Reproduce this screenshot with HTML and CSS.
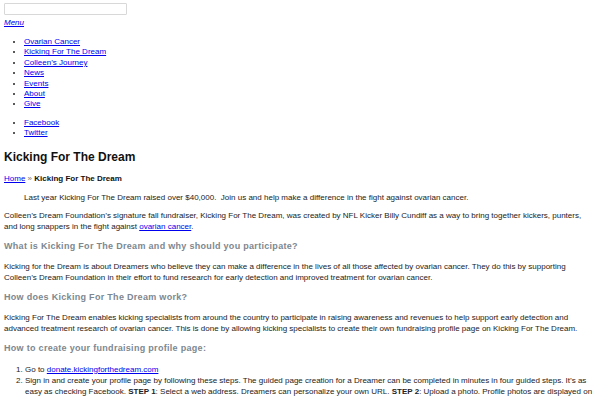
FILE: index.html
```html
<!DOCTYPE html>
<html>
<head>
<meta charset="utf-8">
<link rel="stylesheet" href="styles.css">
</head>
<body>
<div class="page">
  <form class="search"><input class="search-input" type="text"></form>
  <a class="menu-toggle" href="#">Menu</a>
  <ul class="nav">
    <li><a href="#">Ovarian Cancer</a></li>
    <li><a href="#">Kicking For The Dream</a></li>
    <li><a href="#">Colleen’s Journey</a></li>
    <li><a href="#">News</a></li>
    <li><a href="#">Events</a></li>
    <li><a href="#">About</a></li>
    <li><a href="#">Give</a></li>
  </ul>
  <ul class="nav social">
    <li><a href="#">Facebook</a></li>
    <li><a href="#">Twitter</a></li>
  </ul>
  <h1 class="title">Kicking For The Dream</h1>
  <p class="crumbs"><a href="#">Home</a> <span class="sep">»</span> <strong>Kicking For The Dream</strong></p>
  <p class="lead">Last year Kicking For The Dream raised over $40,000.&nbsp; Join us and help make a difference in the fight against ovarian cancer.</p>
  <p>Colleen’s Dream Foundation’s signature fall fundraiser, Kicking For The Dream, was created by NFL Kicker Billy Cundiff as a way to bring together kickers, punters, and long snappers in the fight against <a href="#">ovarian cancer</a>.</p>
  <h2 class="section">What is Kicking For The Dream and why should you participate?</h2>
  <p>Kicking for the Dream is about Dreamers who believe they can make a difference in the lives of all those affected by ovarian cancer. They do this by supporting Colleen’s Dream Foundation in their effort to fund research for early detection and improved treatment for ovarian cancer.</p>
  <h2 class="section">How does Kicking For The Dream work?</h2>
  <p>Kicking For The Dream enables kicking specialists from around the country to participate in raising awareness and revenues to help support early detection and advanced treatment research of ovarian cancer. This is done by allowing kicking specialists to create their own fundraising profile page on Kicking For The Dream.</p>
  <h2 class="section">How to create your fundraising profile page:</h2>
  <ol class="steps">
    <li>Go to <a href="#">donate.kickingforthedream.com</a></li>
    <li>Sign in and create your profile page by following these steps. The guided page creation for a Dreamer can be completed in minutes in four guided steps. It’s as easy as checking Facebook. <strong>STEP 1</strong>: Select a web address. Dreamers can personalize your own URL. <strong>STEP 2</strong>: Upload a photo. Profile photos are displayed on fundraising site. <strong>STEP 3</strong>: Set your fundraising goal. <strong>STEP 4</strong>: Write a short about yourself. Text, videos and photos can be included to make the page your own. When you are done, share your page.</li>
  </ol>
</div>
</body>
</html>
```
FILE: styles.css
```css
html, body {
  margin: 0;
  padding: 0;
  background: #fff;
}
.page {
  padding: 3px 4px;
  font-family: "Liberation Sans", Arial, sans-serif;
  font-size: 8px;
  line-height: 11px;
  color: #222;
}
a {
  color: #0000ee;
}
.search {
  margin: 0;
}
.search-input {
  display: block;
  width: 123px;
  height: 12px;
  box-sizing: border-box;
  margin: 0;
  padding: 0;
  border: 1px solid #d8d8d8;
  border-radius: 1px;
  background: #fff;
}
.menu-toggle {
  display: inline-block;
  margin-top: 2px;
  font-style: italic;
  color: #0000ee;
}
.nav {
  margin: 9px 0 0;
  padding-left: 20px;
  line-height: 10.4px;
}
.nav.social {
  margin-top: 8px;
}
.title {
  margin: 10px 0 0;
  font-size: 12px;
  line-height: 16px;
  font-weight: bold;
  color: #111;
}
.crumbs {
  margin: 8px 0 0;
}
.crumbs .sep {
  color: #777;
}
.crumbs strong {
  color: #111;
}
p {
  margin: 7px 0 0;
}
.crumbs + .lead {
  margin-top: 8px;
}
.lead {
  text-indent: 20px;
}
.section {
  margin: 8px 0 0;
  font-size: 9px;
  line-height: 12px;
  letter-spacing: 0.3px;
  font-weight: bold;
  color: #7d8790;
}
.section + p {
  margin-top: 9px;
}
.steps {
  margin: 10px 0 0;
  padding-left: 21px;
}
```
